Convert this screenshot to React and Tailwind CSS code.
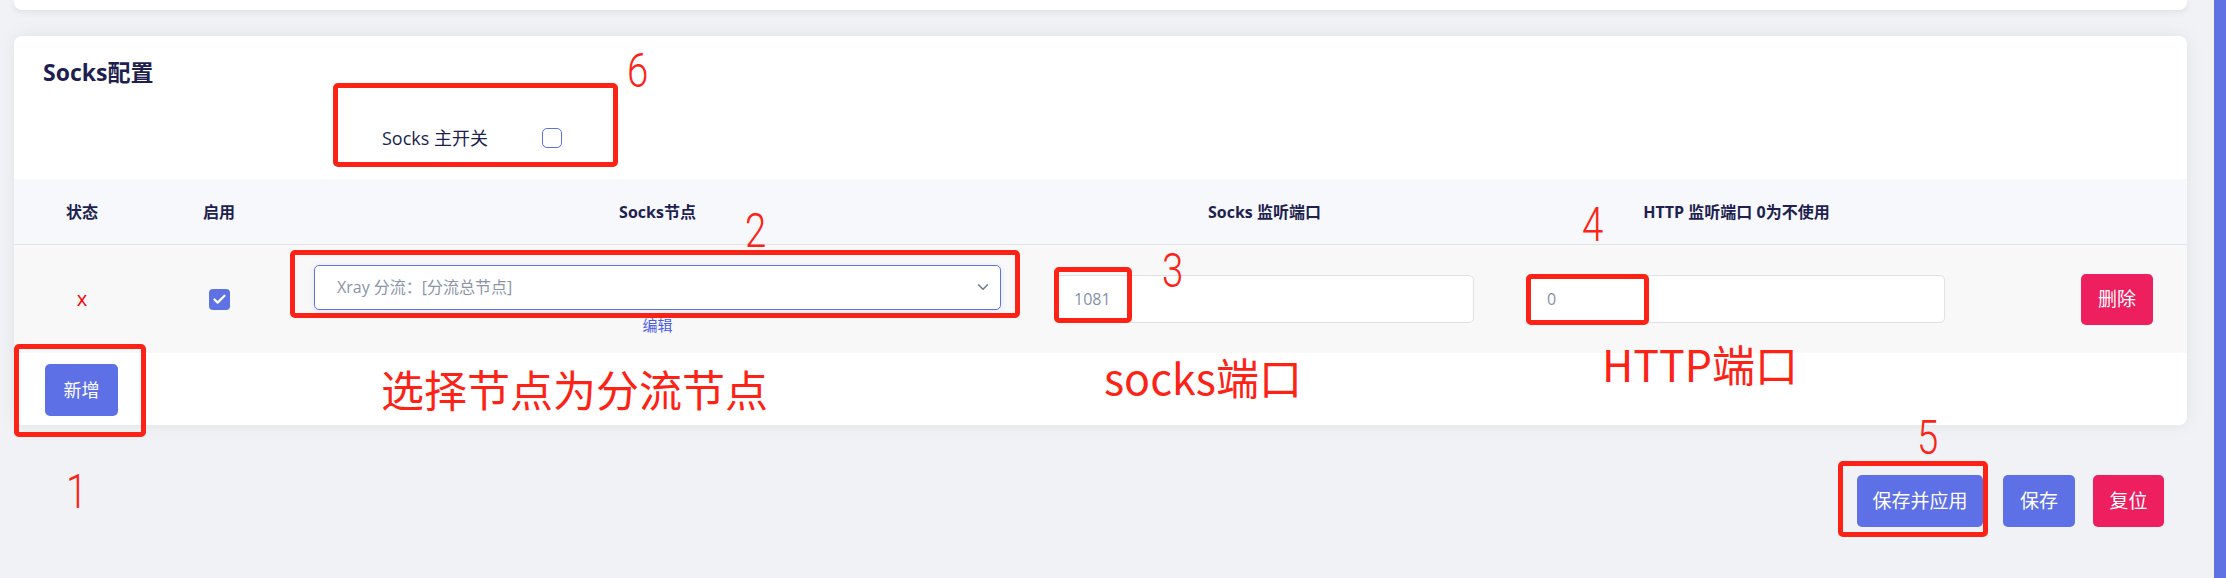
import { ChevronDown, Check } from "lucide-react";

// red annotation frame drawn over the screenshot
const Mark = ({ className }) => (
  <div className={`absolute rounded-[5px] border-[5px] border-[#fd2216] ${className}`} />
);

const Num = ({ children, className }) => (
  <span
    className={`absolute inline-block origin-left scale-x-[0.8] font-['Roboto',sans-serif] text-[48px] font-light leading-none text-[#fd2216] ${className}`}
  >
    {children}
  </span>
);

const Note = ({ children, className }) => (
  <span
    className={`absolute whitespace-nowrap font-['Noto_Sans_CJK_SC',sans-serif] text-[43px] leading-none text-[#fd2216] ${className}`}
  >
    {children}
  </span>
);

const cols = "grid grid-cols-[136px_138px_739px_474px_546px_140px]";

const App = () => {
  return (
    <div className="relative flex min-h-[578px] w-full bg-[#f1f2f5] font-['Open_Sans','Noto_Sans_CJK_SC',sans-serif] text-[#211f4f]">
      <div className="flex-1 pl-[14px] pr-[27px]">
        {/* previous card, cut off */}
        <div className="h-[10px] rounded-b-[8px] bg-white shadow-[0_2px_6px_rgba(136,152,170,0.2)]" />

        {/* Socks card */}
        <div className="mt-[26px] rounded-[8px] bg-white pb-[9px] shadow-[0_0_16px_rgba(136,152,170,0.15)]">
          <h2 className="pl-[29px] pt-[22px] text-[23px] font-bold leading-[28px]">Socks配置</h2>

          <div className="mt-[38px] flex h-[28px] items-center pl-[368px]">
            <span className="w-[160px] text-[18px]">Socks 主开关</span>
            <span className="h-[20px] w-[20px] rounded-[5px] border border-[#5e72e4] bg-white" />
          </div>

          {/* table head */}
          <div className={`${cols} mt-[27px] h-[66px] items-center border-b border-[#e3e3e6] bg-[#f6f8fb] text-[16px] font-bold`}>
            <div className="text-center">状态</div>
            <div className="text-center">启用</div>
            <div className="pl-[26px]">
              <div className="w-[687px] text-center">Socks节点</div>
            </div>
            <div className="pl-[28px]">
              <div className="w-[419px] text-center">Socks 监听端口</div>
            </div>
            <div className="pl-[27px]">
              <div className="w-[417px] text-center">HTTP 监听端口 0为不使用</div>
            </div>
            <div />
          </div>

          {/* table row */}
          <div className={`${cols} h-[108px] items-center bg-[#f8f8f9]`}>
            <div className="text-center text-[20px] text-[#ff0000]">x</div>
            <div className="flex justify-center">
              <span className="flex h-[21px] w-[21px] items-center justify-center rounded-[4px] bg-[#5e72e4]">
                <Check size={15} strokeWidth={3.5} className="text-white" />
              </span>
            </div>
            <div className="pl-[26px]">
              <div className="flex h-[45px] w-[687px] items-center justify-between rounded-[5px] border border-[#5e72e4] bg-white pl-[22px] pr-[8px] text-[16px] text-[#8a94a6] shadow-[0_2px_6px_rgba(94,114,228,0.12)]">
                <span>Xray 分流：[分流总节点]</span>
                <ChevronDown size={18} strokeWidth={2} className="text-[#6b7a90]" />
              </div>
              <div className="mt-[6px] w-[687px] text-center text-[15px] leading-[18px] text-[#4a5ae8]">编辑</div>
            </div>
            <div className="pl-[28px]">
              <div className="flex h-[48px] w-[419px] items-center rounded-[5px] border border-[#dee2e6] bg-white pl-[18px] text-[16px] text-[#8393a8]">
                1081
              </div>
            </div>
            <div className="pl-[27px]">
              <div className="flex h-[48px] w-[417px] items-center rounded-[5px] border border-[#dee2e6] bg-white pl-[18px] text-[16px] text-[#8393a8]">
                0
              </div>
            </div>
            <div className="flex justify-center">
              <button className="h-[51px] w-[72px] rounded-[5px] bg-[#ee1f5f] text-[19px] text-white">删除</button>
            </div>
          </div>

          <button className="ml-[31px] mt-[11px] h-[52px] w-[73px] rounded-[5px] bg-[#5d70e5] text-[18px] text-white">
            新增
          </button>
        </div>

        {/* footer actions */}
        <div className="mt-[50px] flex justify-end pr-[23px]">
          <button className="h-[52px] w-[126px] rounded-[5px] bg-[#5d70e5] text-[19px] text-white">保存并应用</button>
          <button className="ml-[20px] h-[52px] w-[72px] rounded-[5px] bg-[#5d70e5] text-[19px] text-white">保存</button>
          <button className="ml-[18px] h-[52px] w-[71px] rounded-[5px] bg-[#ee1f5f] text-[19px] text-white">复位</button>
        </div>
      </div>

      <div className="w-[12px] bg-[#5e72e4]" />

      {/* annotations */}
      <Mark className="left-[333px] top-[83px] h-[84px] w-[285px]" />
      <Mark className="left-[290px] top-[250px] h-[68px] w-[730px]" />
      <Mark className="left-[1054px] top-[267px] h-[56px] w-[78px]" />
      <Mark className="left-[1526px] top-[274px] h-[51px] w-[123px]" />
      <Mark className="left-[1838px] top-[461px] h-[76px] w-[150px]" />
      <Mark className="left-[14px] top-[344px] h-[93px] w-[132px]" />

      <Num className="left-[627px] top-[47px]">6</Num>
      <Num className="left-[745px] top-[207px]">2</Num>
      <Num className="left-[1162px] top-[247px]">3</Num>
      <Num className="left-[1582px] top-[201px]">4</Num>
      <Num className="left-[1917px] top-[414px]">5</Num>
      <Num className="left-[66px] top-[468px]">1</Num>

      <Note className="left-[381px] top-[367px]">选择节点为分流节点</Note>
      <Note className="left-[1104px] top-[355px]">socks端口</Note>
      <Note className="left-[1602px] top-[342px]">HTTP端口</Note>
    </div>
  );
};

export default App;
